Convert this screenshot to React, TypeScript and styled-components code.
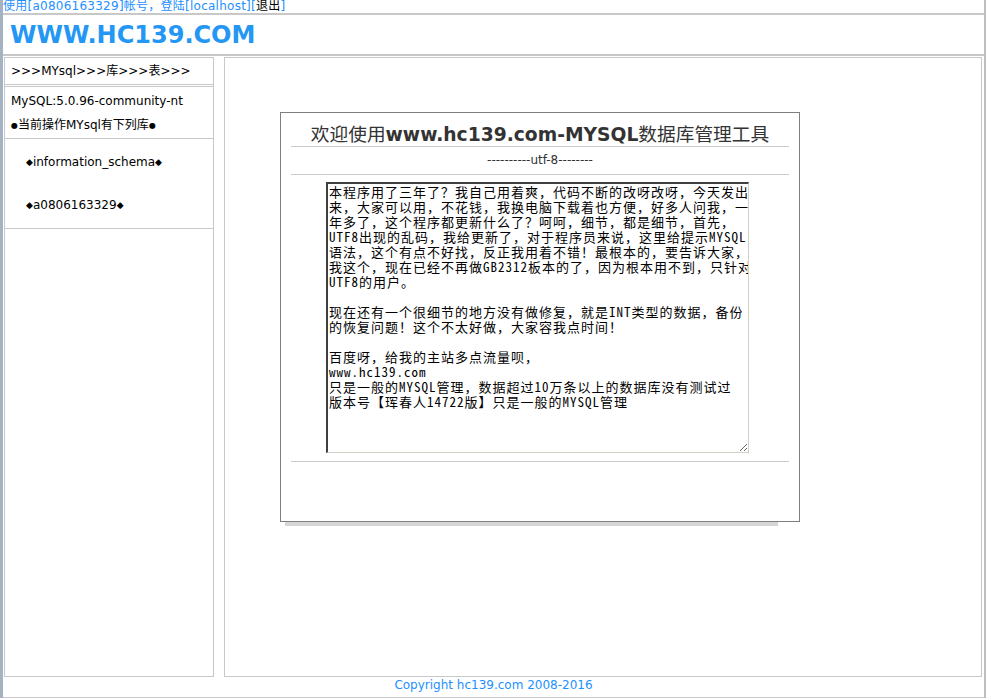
import React from "react";
import styled, { createGlobalStyle } from "styled-components";

const Global = createGlobalStyle`
  html, body { margin: 0; padding: 0; background: #fff; }
  body {
    font-family: "DejaVu Sans", "Noto Sans CJK SC", sans-serif;
    font-size: 12px;
    color: #000;
  }
`;

const Page = styled.div`
  width: 986px;
  height: 698px;
  box-sizing: border-box;
  border-left: 3px solid #a3b3c3;
  border-right: 2px solid #bdbdbd;
  display: flex;
  flex-direction: column;
  overflow: hidden;
`;

const UserBar = styled.div`
  height: 13px;
  line-height: 13px;
  border-bottom: 2px solid #c8c8c8;
  white-space: nowrap;
  letter-spacing: 0.25px;
  color: #1e90ff;
`;

const Link = styled.a<{ $dark?: boolean }>`
  color: ${(p) => (p.$dark ? "#000" : "#1e90ff")};
  text-decoration: none;
`;

const Header = styled.div`
  height: 39px;
  border-bottom: 2px solid #c8c8c8;
  display: flex;
  align-items: center;
  padding-left: 7px;
`;

const Logo = styled.h1`
  margin: 0;
  font-family: "DejaVu Sans", sans-serif;
  font-weight: bold;
  font-size: 24px;
  color: #2397f3;
`;

const Body = styled.div`
  flex: 1;
  display: flex;
  gap: 10px;
  padding: 1px 1px 0 1px;
  min-height: 0;
`;

const Sidebar = styled.div`
  width: 210px;
  box-sizing: border-box;
  border: 1px solid #c8c8c8;
  display: flex;
  flex-direction: column;
`;

const NavRow = styled.div`
  height: 26px;
  line-height: 26px;
  padding-left: 6px;
  border-bottom: 1px solid #c8c8c8;
  margin-bottom: 1px;
`;

const Info = styled.div`
  border-top: 1px solid #c8c8c8;
  border-bottom: 1px solid #c8c8c8;
  padding: 2px 0 0 6px;
  line-height: 24px;
`;

const Dot = styled.span`
  font-size: 8px;
  vertical-align: 1px;
`;

const DbList = styled.ul`
  list-style: none;
  margin: 0;
  padding: 2px 0 1px 21px;
  border-bottom: 1px solid #c8c8c8;
`;

const DbItem = styled.li`
  height: 43px;
  line-height: 43px;
`;

const Diamond = styled.span`
  font-size: 9px;
  vertical-align: 1px;
`;

const Main = styled.div`
  flex: 1;
  box-sizing: border-box;
  border: 1px solid #c8c8c8;
  margin-right: 1px;
`;

const Panel = styled.div`
  position: relative;
  width: 520px;
  height: 410px;
  box-sizing: border-box;
  margin: 54px 0 0 55px;
  border: 1px solid #7f7f7f;
  padding: 0 10px;
  background: #fff;

  &::after {
    content: "";
    position: absolute;
    left: 4px;
    right: 21px;
    bottom: -5px;
    height: 4px;
    background: #d6d6d6;
  }
`;

const Title = styled.div`
  padding-top: 10px;
  line-height: 23px;
  text-align: center;
  font-size: 18.7px;
  color: #333;
  border-bottom: 1px solid #cccccc;
  font-family: "DejaVu Sans", "Noto Sans CJK SC", sans-serif;
  white-space: nowrap;
`;

const Strong = styled.b`
  font-weight: bold;
`;

const Charset = styled.div`
  line-height: 27px;
  text-align: center;
  color: #333;
  border-bottom: 1px solid #cccccc;
`;

const EditorRow = styled.div`
  padding: 7px 0 8px 35px;
  border-bottom: 1px solid #cccccc;
  line-height: 0;
`;

const Notes = styled.textarea`
  width: 423px;
  height: 271px;
  box-sizing: border-box;
  margin: 0;
  padding: 0 1px;
  border-width: 2px 1px 1px 2px;
  border-style: solid;
  border-color: #404040 #d4d0c8 #d4d0c8 #404040;
  font-family: "Noto Sans Mono CJK SC", "Noto Sans CJK SC", monospace;
  font-size: 13px;
  letter-spacing: 1px;
  line-height: 15px;
  color: #000;
  background: #fff;
  overflow: hidden;
  white-space: pre;
  resize: both;
  outline: none;
`;

const Footer = styled.div`
  height: 20px;
  line-height: 16px;
  text-align: center;
  color: #1e90ff;
  border-bottom: 1px solid #c8c8c8;
`;

const notes = [
  "本程序用了三年了？我自己用着爽，代码不断的改呀改呀，今天发出",
  "来，大家可以用，不花钱，我换电脑下载着也方便，好多人问我，一",
  "年多了，这个程序都更新什么了？呵呵，细节，都是细节，首先，",
  "UTF8出现的乱码，我给更新了，对于程序员来说，这里给提示MYSQL",
  "语法，这个有点不好找，反正我用着不错！最根本的，要告诉大家，",
  "我这个，现在已经不再做GB2312板本的了，因为根本用不到，只针对",
  "UTF8的用户。",
  "",
  "现在还有一个很细节的地方没有做修复，就是INT类型的数据，备份",
  "的恢复问题！这个不太好做，大家容我点时间！",
  "",
  "百度呀，给我的主站多点流量呗，",
  "www.hc139.com",
  "只是一般的MYSQL管理，数据超过10万条以上的数据库没有测试过",
  "版本号【珲春人14722版】只是一般的MYSQL管理",
].join("\n");

const databases = ["information_schema", "a0806163329"];

export default function App() {
  return (
    <>
      <Global />
      <Page>
        <UserBar>
          <Link href="#">使用[a0806163329]帐号，登陆[localhost][</Link>
          <Link href="#" $dark>退出</Link>
          <Link href="#">]</Link>
        </UserBar>
        <Header>
          <Logo>WWW.HC139.COM</Logo>
        </Header>
        <Body>
          <Sidebar>
            <NavRow>&gt;&gt;&gt;MYsql&gt;&gt;&gt;库&gt;&gt;&gt;表&gt;&gt;&gt;</NavRow>
            <Info>
              <div>MySQL:5.0.96-community-nt</div>
              <div>
                <Dot>●</Dot>当前操作MYsql有下列库<Dot>●</Dot>
              </div>
            </Info>
            <DbList>
              {databases.map((db) => (
                <DbItem key={db}>
                  <Diamond>◆</Diamond>
                  {db}
                  <Diamond>◆</Diamond>
                </DbItem>
              ))}
            </DbList>
          </Sidebar>
          <Main>
            <Panel>
              <Title>
                欢迎使用<Strong>www.hc139.com-MYSQL</Strong>数据库管理工具
              </Title>
              <Charset>----------utf-8--------</Charset>
              <EditorRow>
                <Notes readOnly wrap="off" defaultValue={notes} />
              </EditorRow>
            </Panel>
          </Main>
        </Body>
        <Footer>Copyright hc139.com 2008-2016</Footer>
      </Page>
    </>
  );
}
